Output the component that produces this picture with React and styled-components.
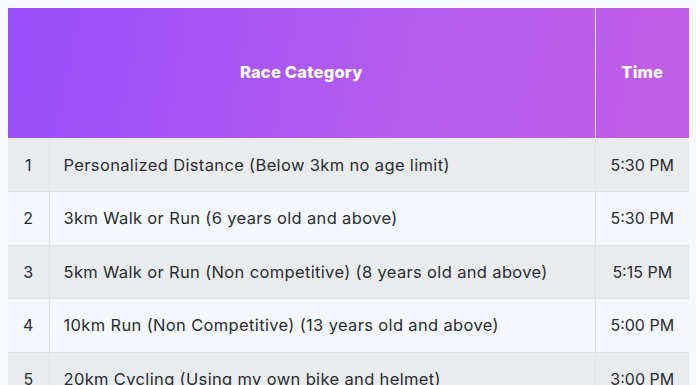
import styled, { createGlobalStyle } from "styled-components";

const GlobalStyle = createGlobalStyle`
  body {
    margin: 8px 7px 8px 8px;
    background-color: #f7f9fc;
    font-family: Inter, "Noto Sans", sans-serif;
  }
`;

const Table = styled.table`
  width: 681px;
  border-collapse: collapse;
  table-layout: fixed;
  color: #2a2d31;
`;

const Col = styled.col`
  width: ${(p) => p.$w}px;
`;

const HeadRow = styled.tr`
  height: 130px;
  background: linear-gradient(100deg, #9a4ffc 0%, #b45ced 60%, #c25ee6 100%);
`;

const HeadCell = styled.th`
  color: #ffffff;
  font-size: 16.5px;
  font-weight: 800;
  letter-spacing: 0.2px;
  text-align: center;
  padding: 0 0 2px;
  border-left: ${(p) => (p.$divider ? "1px solid rgba(255,255,255,0.75)" : "none")};
`;

const Row = styled.tr`
  height: 53.5px;
  background-color: ${(p) => (p.$odd ? "#e9ecef" : "#f4f8fc")};
  border-bottom: 1px solid #dee2e6;
`;

const NumCell = styled.td`
  font-size: 16px;
  padding: 0;
  text-align: center;
`;

const NameCell = styled.td`
  font-size: 16.5px;
  letter-spacing: 0.35px;
  padding: 0 14px;
  white-space: nowrap;
  border-left: 1px solid #dee2e6;
`;

const TimeCell = styled.td`
  font-size: 16px;
  padding: 0;
  text-align: center;
  white-space: nowrap;
  border-left: 1px solid #dee2e6;
`;

const rows = [
  ["Personalized Distance (Below 3km no age limit)", "5:30 PM"],
  ["3km Walk or Run (6 years old and above)", "5:30 PM"],
  ["5km Walk or Run (Non competitive) (8 years old and above)", "5:15 PM"],
  ["10km Run (Non Competitive) (13 years old and above)", "5:00 PM"],
  ["20km Cycling (Using my own bike and helmet)", "3:00 PM"],
];

export default function App() {
  return (
    <>
      <GlobalStyle />
      <Table>
        <colgroup>
          <Col $w={41} />
          <Col $w={546} />
          <Col $w={94} />
        </colgroup>
        <thead>
          <HeadRow>
            <HeadCell colSpan={2}>Race Category</HeadCell>
            <HeadCell $divider>Time</HeadCell>
          </HeadRow>
        </thead>
        <tbody>
          {rows.map(([name, time], i) => (
            <Row key={i} $odd={i % 2 === 0}>
              <NumCell>{i + 1}</NumCell>
              <NameCell>{name}</NameCell>
              <TimeCell>{time}</TimeCell>
            </Row>
          ))}
        </tbody>
      </Table>
    </>
  );
}
